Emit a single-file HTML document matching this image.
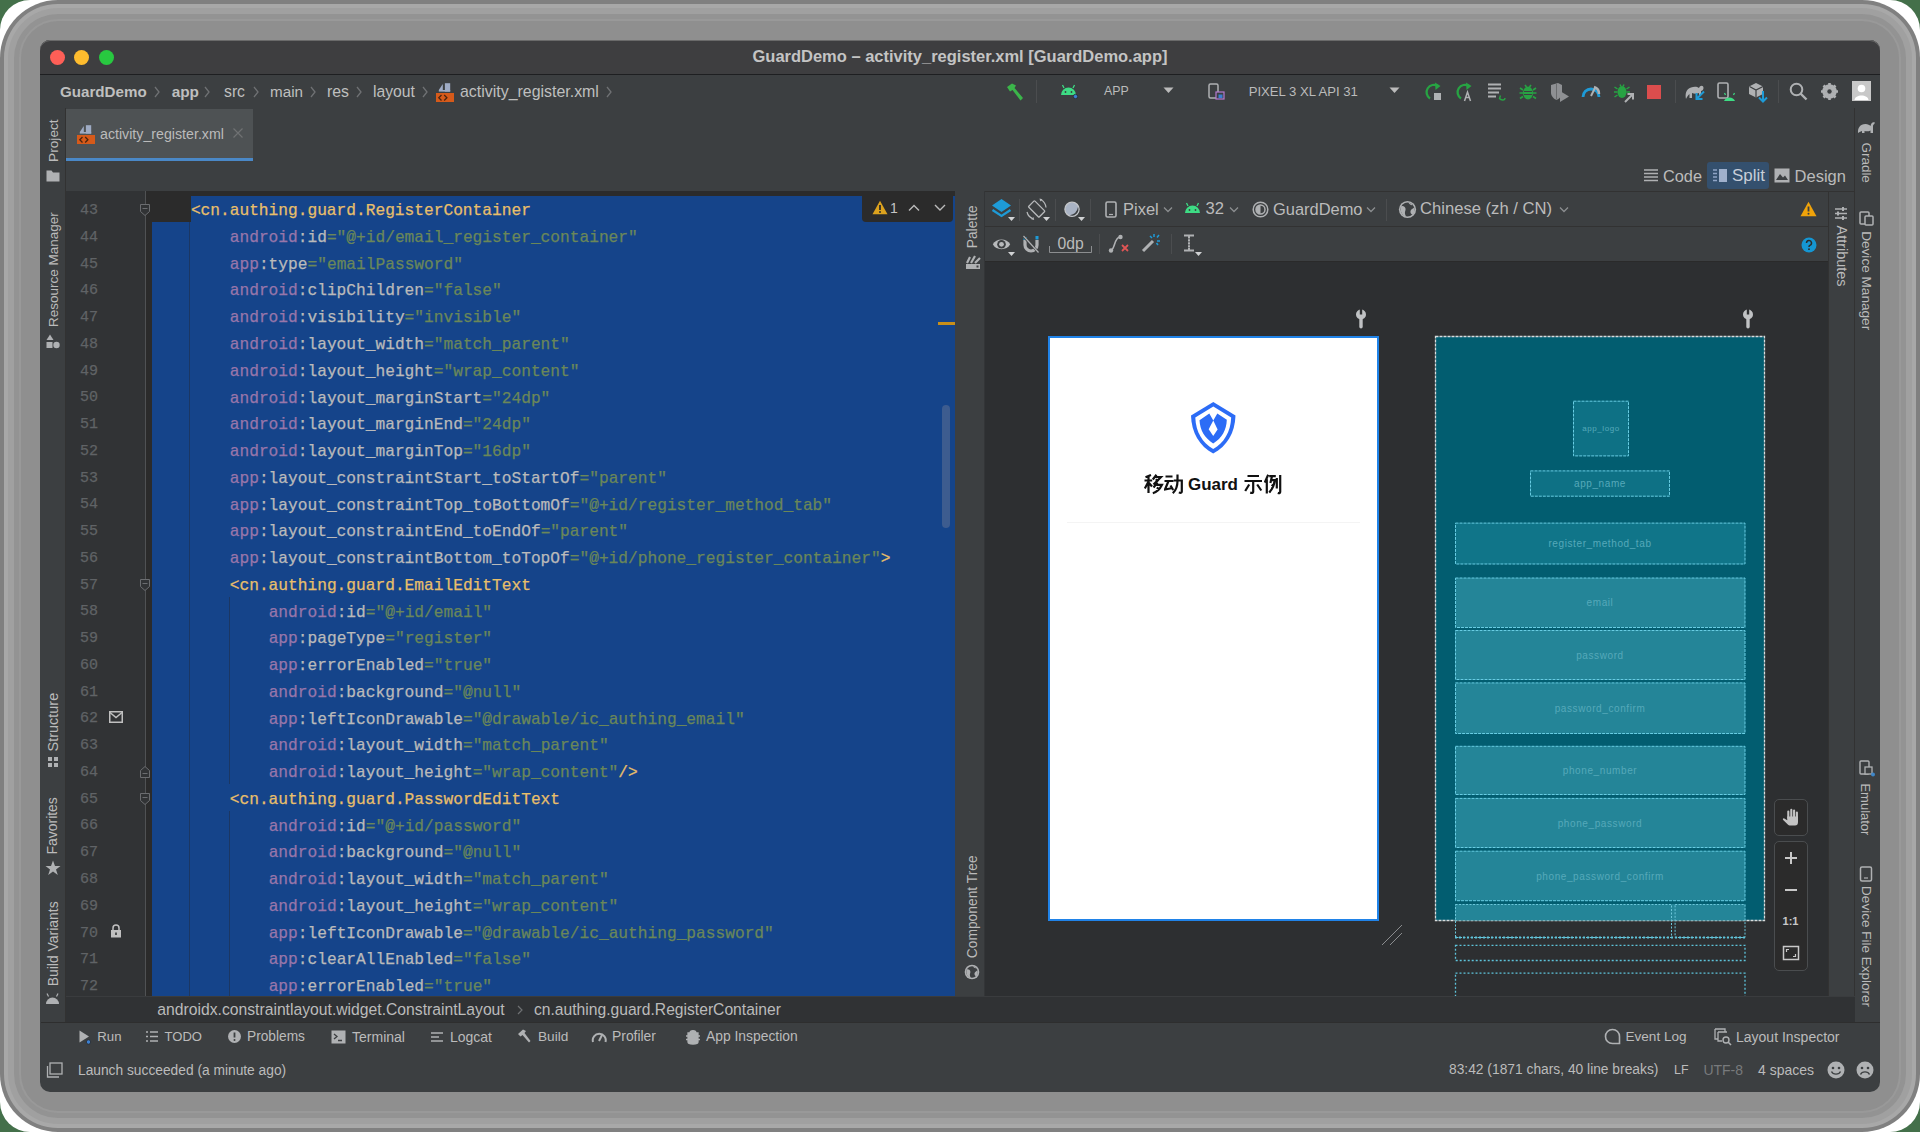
<!DOCTYPE html><html><head><meta charset="utf-8"><style>
html,body{margin:0;padding:0;width:1920px;height:1132px;overflow:hidden;background:#44704a;}
.t{position:absolute;white-space:pre;line-height:1;font-family:"Liberation Sans",sans-serif;}
.m{position:absolute;white-space:pre;font-family:"Liberation Mono",monospace;-webkit-text-stroke:0.25px currentColor;}
</style></head><body>
<div style="position:absolute;left:0px;top:0px;width:1920px;height:1132px;background:#ffffff;border-radius:30px;"></div>
<div style="position:absolute;left:0px;top:0px;width:1920px;height:1132px;background:#808080;border-radius:58px;"></div>
<div style="position:absolute;left:4px;top:4px;width:1912px;height:1124px;background:#a8a8a8;border-radius:54px;"></div>
<div style="position:absolute;left:8px;top:8px;width:1904px;height:1116px;background:#a0a0a0;border-radius:50px;"></div>
<div style="position:absolute;left:14px;top:14px;width:1892px;height:1104px;background:#939393;border-radius:44px;"></div>
<div style="position:absolute;left:19px;top:19px;width:1882px;height:1094px;background:#999999;border-radius:39px;"></div>
<div style="position:absolute;left:21px;top:21px;width:1878px;height:1090px;background:#8f8f8f;border-radius:37px;"></div>
<div style="position:absolute;left:40px;top:40px;width:1840px;height:1052px;background:#3c3f41;border-radius:10px;"></div>
<div style="position:absolute;left:40px;top:40px;width:1840px;height:34px;background:#3e3e40;border-top-left-radius:10px;border-top-right-radius:10px;box-shadow:inset 0 1px 0 #6a6a6a;"></div>
<div style="position:absolute;left:40px;top:74px;width:1840px;height:1px;background:#1e1f21;"></div>
<div style="position:absolute;left:50.0px;top:49.5px;width:15px;height:15px;border-radius:50%;background:#fe5f57;"></div>
<div style="position:absolute;left:74.2px;top:49.5px;width:15px;height:15px;border-radius:50%;background:#febc2e;"></div>
<div style="position:absolute;left:98.5px;top:49.5px;width:15px;height:15px;border-radius:50%;background:#28c840;"></div>
<div class="t" style="left:752.5px;top:47.9px;font-size:16.49px;color:#c4c4c4;font-weight:bold;">GuardDemo – activity_register.xml [GuardDemo.app]</div>
<div class="t" style="left:60.0px;top:84.1px;font-size:15.15px;color:#bfbfbf;font-weight:bold;">GuardDemo</div>
<div class="t" style="left:171.7px;top:84.0px;font-size:15.36px;color:#bfbfbf;font-weight:bold;">app</div>
<div class="t" style="left:224.0px;top:83.8px;font-size:15.75px;color:#bfbfbf;">src</div>
<div class="t" style="left:270.0px;top:84.0px;font-size:15.23px;color:#bfbfbf;">main</div>
<div class="t" style="left:327.0px;top:83.7px;font-size:15.84px;color:#bfbfbf;">res</div>
<div class="t" style="left:373.0px;top:83.8px;font-size:15.74px;color:#bfbfbf;">layout</div>
<div class="t" style="left:460.0px;top:83.7px;font-size:15.93px;color:#bfbfbf;">activity_register.xml</div>
<svg style="position:absolute;left:152.7px;top:85px;" width="8" height="14" viewBox="0 0 8 14"><path d="M2 2 L6 7 L2 12" fill="none" stroke="#6f7173" stroke-width="1.3"/></svg>
<svg style="position:absolute;left:203px;top:85px;" width="8" height="14" viewBox="0 0 8 14"><path d="M2 2 L6 7 L2 12" fill="none" stroke="#6f7173" stroke-width="1.3"/></svg>
<svg style="position:absolute;left:252px;top:85px;" width="8" height="14" viewBox="0 0 8 14"><path d="M2 2 L6 7 L2 12" fill="none" stroke="#6f7173" stroke-width="1.3"/></svg>
<svg style="position:absolute;left:309px;top:85px;" width="8" height="14" viewBox="0 0 8 14"><path d="M2 2 L6 7 L2 12" fill="none" stroke="#6f7173" stroke-width="1.3"/></svg>
<svg style="position:absolute;left:355px;top:85px;" width="8" height="14" viewBox="0 0 8 14"><path d="M2 2 L6 7 L2 12" fill="none" stroke="#6f7173" stroke-width="1.3"/></svg>
<svg style="position:absolute;left:421px;top:85px;" width="8" height="14" viewBox="0 0 8 14"><path d="M2 2 L6 7 L2 12" fill="none" stroke="#6f7173" stroke-width="1.3"/></svg>
<svg style="position:absolute;left:605px;top:85px;" width="8" height="14" viewBox="0 0 8 14"><path d="M2 2 L6 7 L2 12" fill="none" stroke="#6f7173" stroke-width="1.3"/></svg>
<div style="position:absolute;left:41px;top:108px;width:25px;height:914px;background:#3c3f41;"></div>
<div style="position:absolute;left:65px;top:108px;width:1px;height:914px;background:#323232;"></div>
<div class="t" style="left:32.0px;top:134.1px;width:42.5px;font-size:13.66px;color:#bbbbbb;transform:rotate(-90deg);transform-origin:21.2px 6.7px;">Project</div>
<div class="t" style="left:-4.2px;top:263.3px;width:114.9px;font-size:13.51px;color:#bbbbbb;transform:rotate(-90deg);transform-origin:57.4px 6.6px;">Resource Manager</div>
<div class="t" style="left:23.7px;top:714.6px;width:58.6px;font-size:14.44px;color:#bbbbbb;transform:rotate(-90deg);transform-origin:29.3px 7.1px;">Structure</div>
<div class="t" style="left:24.4px;top:819.3px;width:57.2px;font-size:13.91px;color:#bbbbbb;transform:rotate(-90deg);transform-origin:28.6px 6.8px;">Favorites</div>
<div class="t" style="left:10.5px;top:936.7px;width:85.0px;font-size:13.94px;color:#bbbbbb;transform:rotate(-90deg);transform-origin:42.5px 6.8px;">Build Variants</div>
<svg style="position:absolute;left:46px;top:169px;" width="14" height="13" viewBox="0 0 14 13"><path d="M0.5 1.5 h5 l1.5 2 h6.5 v9 h-13z" fill="#afb1b3"/></svg>
<svg style="position:absolute;left:46px;top:334px;" width="14" height="15" viewBox="0 0 14 15"><path d="M4 0.5 L7.5 6 H0.5z" fill="#afb1b3"/><rect x="0.5" y="8" width="6" height="6" fill="#afb1b3"/><circle cx="10.5" cy="11" r="3.2" fill="#afb1b3"/></svg>
<svg style="position:absolute;left:47px;top:756px;" width="12" height="14" viewBox="0 0 12 14"><rect x="1" y="1" width="4" height="4" fill="#afb1b3"/><rect x="7" y="1" width="4" height="4" fill="#afb1b3"/><rect x="1" y="7" width="4" height="4" fill="#afb1b3"/><rect x="7" y="7" width="4" height="4" fill="#afb1b3"/></svg>
<svg style="position:absolute;left:45px;top:860px;" width="16" height="16" viewBox="0 0 16 16"><path d="M8 0.5 L10 6 L15.5 6 L11 9.5 L12.8 15 L8 11.6 L3.2 15 L5 9.5 L0.5 6 L6 6z" fill="#afb1b3"/></svg>
<svg style="position:absolute;left:45px;top:992px;" width="15" height="13" viewBox="0 0 15 13"><path d="M1 12 A6.5 6.5 0 0 1 14 12z" fill="#afb1b3"/><path d="M3.5 4.5 L2 1.5 M11.5 4.5 L13 1.5" stroke="#afb1b3" stroke-width="1.2"/></svg>
<div style="position:absolute;left:66px;top:108px;width:1814px;height:53px;background:#3c3f41;"></div>
<div style="position:absolute;left:66px;top:109px;width:187px;height:49px;background:#4e5254;"></div>
<div style="position:absolute;left:66px;top:158px;width:187px;height:3px;background:#4a88c7;"></div>
<div class="t" style="left:100.0px;top:126.5px;font-size:14.21px;color:#bbbbbb;">activity_register.xml</div>
<svg style="position:absolute;left:77px;top:125px;" width="18" height="19" viewBox="0 0 18 19"><path d="M2.8 7 L6.8 1 V7Z" fill="#9eabc4"/><rect x="8.9" y="0.2" width="5.3" height="8.4" fill="#9eabc4"/><rect x="2.8" y="7" width="11.4" height="1.6" fill="#9eabc4"/><rect x="0" y="10" width="18" height="9" fill="#d65a1a"/><path d="M5.5 12 L2.8 14.8 L5.5 17.5 M8.2 12 L10.9 14.8 L8.2 17.5" stroke="#4a2510" stroke-width="1.3" fill="none"/></svg>
<svg style="position:absolute;left:232px;top:127px;" width="12" height="12" viewBox="0 0 12 12"><path d="M1.5 1.5 L10.5 10.5 M10.5 1.5 L1.5 10.5" stroke="#6f7173" stroke-width="1.2"/></svg>
<div style="position:absolute;left:1707px;top:162px;width:62px;height:27px;background:#34506e;border-radius:3px;"></div>
<div class="t" style="left:1663.0px;top:167.6px;font-size:16.31px;color:#bbbbbb;">Code</div>
<div class="t" style="left:1732.0px;top:167.9px;font-size:16.96px;color:#c8ced8;">Split</div>
<div class="t" style="left:1794.6px;top:167.5px;font-size:16.51px;color:#bbbbbb;">Design</div>
<svg style="position:absolute;left:1643px;top:168px;" width="16" height="15" viewBox="0 0 16 15"><path d="M1 2h14M1 5.5h14M1 9h14M1 12.5h14" stroke="#afb1b3" stroke-width="1.6"/></svg>
<svg style="position:absolute;left:1712px;top:168px;" width="16" height="15" viewBox="0 0 16 15"><path d="M1 2h4M1 5.5h4M1 9h4M1 12.5h4" stroke="#8fa4c6" stroke-width="1.6"/><rect x="7" y="1" width="8" height="13" fill="#9fb0cc"/></svg>
<svg style="position:absolute;left:1774px;top:168px;" width="16" height="15" viewBox="0 0 16 15"><rect x="0.5" y="0.5" width="15" height="14" fill="#afb1b3"/><path d="M2 12 L6 6 L9 9.5 L11 7.5 L14 12z" fill="#3c3f41"/></svg>
<div style="position:absolute;left:66px;top:161px;width:889px;height:30px;background:#3c3f41;"></div>
<div style="position:absolute;left:66px;top:191px;width:889px;height:805px;background:#2b2b2b;"></div>
<div style="position:absolute;left:66px;top:191px;width:79px;height:805px;background:#313335;"></div>
<div style="position:absolute;left:144.5px;top:191px;width:1.3px;height:805px;background:#505254;"></div>
<div style="position:absolute;left:191px;top:195.5px;width:764px;height:27.26px;background:#15448a;"></div>
<div style="position:absolute;left:152px;top:222.26px;width:803px;height:773.74px;background:#15448a;"></div>
<div style="position:absolute;left:189px;top:222.26px;width:1px;height:773.74px;background:#1b3763;"></div>
<div style="position:absolute;left:228.5px;top:596.9000000000001px;width:1px;height:187.32000000000002px;background:#1b3763;"></div>
<div style="position:absolute;left:228.5px;top:810.98px;width:1px;height:185.01999999999998px;background:#1b3763;"></div>
<div class="m" style="left:190.88px;top:198.20px;height:26.76px;line-height:26.76px;font-size:16.2px;"><span style="color:#e8bf6a">&lt;cn.authing.guard.RegisterContainer</span></div>
<div class="m" style="left:60px;width:38px;text-align:right;top:198.00px;line-height:26.76px;font-size:15px;color:#606366;">43</div>
<div class="m" style="left:229.76px;top:224.96px;height:26.76px;line-height:26.76px;font-size:16.2px;"><span style="color:#9876aa">android</span><span style="color:#bababa">:id</span><span style="color:#6a8759">="@+id/email_register_container"</span></div>
<div class="m" style="left:60px;width:38px;text-align:right;top:224.76px;line-height:26.76px;font-size:15px;color:#606366;">44</div>
<div class="m" style="left:229.76px;top:251.72px;height:26.76px;line-height:26.76px;font-size:16.2px;"><span style="color:#9876aa">app</span><span style="color:#bababa">:type</span><span style="color:#6a8759">="emailPassword"</span></div>
<div class="m" style="left:60px;width:38px;text-align:right;top:251.52px;line-height:26.76px;font-size:15px;color:#606366;">45</div>
<div class="m" style="left:229.76px;top:278.48px;height:26.76px;line-height:26.76px;font-size:16.2px;"><span style="color:#9876aa">android</span><span style="color:#bababa">:clipChildren</span><span style="color:#6a8759">="false"</span></div>
<div class="m" style="left:60px;width:38px;text-align:right;top:278.28px;line-height:26.76px;font-size:15px;color:#606366;">46</div>
<div class="m" style="left:229.76px;top:305.24px;height:26.76px;line-height:26.76px;font-size:16.2px;"><span style="color:#9876aa">android</span><span style="color:#bababa">:visibility</span><span style="color:#6a8759">="invisible"</span></div>
<div class="m" style="left:60px;width:38px;text-align:right;top:305.04px;line-height:26.76px;font-size:15px;color:#606366;">47</div>
<div class="m" style="left:229.76px;top:332.00px;height:26.76px;line-height:26.76px;font-size:16.2px;"><span style="color:#9876aa">android</span><span style="color:#bababa">:layout_width</span><span style="color:#6a8759">="match_parent"</span></div>
<div class="m" style="left:60px;width:38px;text-align:right;top:331.80px;line-height:26.76px;font-size:15px;color:#606366;">48</div>
<div class="m" style="left:229.76px;top:358.76px;height:26.76px;line-height:26.76px;font-size:16.2px;"><span style="color:#9876aa">android</span><span style="color:#bababa">:layout_height</span><span style="color:#6a8759">="wrap_content"</span></div>
<div class="m" style="left:60px;width:38px;text-align:right;top:358.56px;line-height:26.76px;font-size:15px;color:#606366;">49</div>
<div class="m" style="left:229.76px;top:385.52px;height:26.76px;line-height:26.76px;font-size:16.2px;"><span style="color:#9876aa">android</span><span style="color:#bababa">:layout_marginStart</span><span style="color:#6a8759">="24dp"</span></div>
<div class="m" style="left:60px;width:38px;text-align:right;top:385.32px;line-height:26.76px;font-size:15px;color:#606366;">50</div>
<div class="m" style="left:229.76px;top:412.28px;height:26.76px;line-height:26.76px;font-size:16.2px;"><span style="color:#9876aa">android</span><span style="color:#bababa">:layout_marginEnd</span><span style="color:#6a8759">="24dp"</span></div>
<div class="m" style="left:60px;width:38px;text-align:right;top:412.08px;line-height:26.76px;font-size:15px;color:#606366;">51</div>
<div class="m" style="left:229.76px;top:439.04px;height:26.76px;line-height:26.76px;font-size:16.2px;"><span style="color:#9876aa">android</span><span style="color:#bababa">:layout_marginTop</span><span style="color:#6a8759">="16dp"</span></div>
<div class="m" style="left:60px;width:38px;text-align:right;top:438.84px;line-height:26.76px;font-size:15px;color:#606366;">52</div>
<div class="m" style="left:229.76px;top:465.80px;height:26.76px;line-height:26.76px;font-size:16.2px;"><span style="color:#9876aa">app</span><span style="color:#bababa">:layout_constraintStart_toStartOf</span><span style="color:#6a8759">="parent"</span></div>
<div class="m" style="left:60px;width:38px;text-align:right;top:465.60px;line-height:26.76px;font-size:15px;color:#606366;">53</div>
<div class="m" style="left:229.76px;top:492.56px;height:26.76px;line-height:26.76px;font-size:16.2px;"><span style="color:#9876aa">app</span><span style="color:#bababa">:layout_constraintTop_toBottomOf</span><span style="color:#6a8759">="@+id/register_method_tab"</span></div>
<div class="m" style="left:60px;width:38px;text-align:right;top:492.36px;line-height:26.76px;font-size:15px;color:#606366;">54</div>
<div class="m" style="left:229.76px;top:519.32px;height:26.76px;line-height:26.76px;font-size:16.2px;"><span style="color:#9876aa">app</span><span style="color:#bababa">:layout_constraintEnd_toEndOf</span><span style="color:#6a8759">="parent"</span></div>
<div class="m" style="left:60px;width:38px;text-align:right;top:519.12px;line-height:26.76px;font-size:15px;color:#606366;">55</div>
<div class="m" style="left:229.76px;top:546.08px;height:26.76px;line-height:26.76px;font-size:16.2px;"><span style="color:#9876aa">app</span><span style="color:#bababa">:layout_constraintBottom_toTopOf</span><span style="color:#6a8759">="@+id/phone_register_container"</span><span style="color:#e8bf6a">&gt;</span></div>
<div class="m" style="left:60px;width:38px;text-align:right;top:545.88px;line-height:26.76px;font-size:15px;color:#606366;">56</div>
<div class="m" style="left:229.76px;top:572.84px;height:26.76px;line-height:26.76px;font-size:16.2px;"><span style="color:#e8bf6a">&lt;cn.authing.guard.EmailEditText</span></div>
<div class="m" style="left:60px;width:38px;text-align:right;top:572.64px;line-height:26.76px;font-size:15px;color:#606366;">57</div>
<div class="m" style="left:268.64px;top:599.60px;height:26.76px;line-height:26.76px;font-size:16.2px;"><span style="color:#9876aa">android</span><span style="color:#bababa">:id</span><span style="color:#6a8759">="@+id/email"</span></div>
<div class="m" style="left:60px;width:38px;text-align:right;top:599.40px;line-height:26.76px;font-size:15px;color:#606366;">58</div>
<div class="m" style="left:268.64px;top:626.36px;height:26.76px;line-height:26.76px;font-size:16.2px;"><span style="color:#9876aa">app</span><span style="color:#bababa">:pageType</span><span style="color:#6a8759">="register"</span></div>
<div class="m" style="left:60px;width:38px;text-align:right;top:626.16px;line-height:26.76px;font-size:15px;color:#606366;">59</div>
<div class="m" style="left:268.64px;top:653.12px;height:26.76px;line-height:26.76px;font-size:16.2px;"><span style="color:#9876aa">app</span><span style="color:#bababa">:errorEnabled</span><span style="color:#6a8759">="true"</span></div>
<div class="m" style="left:60px;width:38px;text-align:right;top:652.92px;line-height:26.76px;font-size:15px;color:#606366;">60</div>
<div class="m" style="left:268.64px;top:679.88px;height:26.76px;line-height:26.76px;font-size:16.2px;"><span style="color:#9876aa">android</span><span style="color:#bababa">:background</span><span style="color:#6a8759">="@null"</span></div>
<div class="m" style="left:60px;width:38px;text-align:right;top:679.68px;line-height:26.76px;font-size:15px;color:#606366;">61</div>
<div class="m" style="left:268.64px;top:706.64px;height:26.76px;line-height:26.76px;font-size:16.2px;"><span style="color:#9876aa">app</span><span style="color:#bababa">:leftIconDrawable</span><span style="color:#6a8759">="@drawable/ic_authing_email"</span></div>
<div class="m" style="left:60px;width:38px;text-align:right;top:706.44px;line-height:26.76px;font-size:15px;color:#606366;">62</div>
<div class="m" style="left:268.64px;top:733.40px;height:26.76px;line-height:26.76px;font-size:16.2px;"><span style="color:#9876aa">android</span><span style="color:#bababa">:layout_width</span><span style="color:#6a8759">="match_parent"</span></div>
<div class="m" style="left:60px;width:38px;text-align:right;top:733.20px;line-height:26.76px;font-size:15px;color:#606366;">63</div>
<div class="m" style="left:268.64px;top:760.16px;height:26.76px;line-height:26.76px;font-size:16.2px;"><span style="color:#9876aa">android</span><span style="color:#bababa">:layout_height</span><span style="color:#6a8759">="wrap_content"</span><span style="color:#e8bf6a">/&gt;</span></div>
<div class="m" style="left:60px;width:38px;text-align:right;top:759.96px;line-height:26.76px;font-size:15px;color:#606366;">64</div>
<div class="m" style="left:229.76px;top:786.92px;height:26.76px;line-height:26.76px;font-size:16.2px;"><span style="color:#e8bf6a">&lt;cn.authing.guard.PasswordEditText</span></div>
<div class="m" style="left:60px;width:38px;text-align:right;top:786.72px;line-height:26.76px;font-size:15px;color:#606366;">65</div>
<div class="m" style="left:268.64px;top:813.68px;height:26.76px;line-height:26.76px;font-size:16.2px;"><span style="color:#9876aa">android</span><span style="color:#bababa">:id</span><span style="color:#6a8759">="@+id/password"</span></div>
<div class="m" style="left:60px;width:38px;text-align:right;top:813.48px;line-height:26.76px;font-size:15px;color:#606366;">66</div>
<div class="m" style="left:268.64px;top:840.44px;height:26.76px;line-height:26.76px;font-size:16.2px;"><span style="color:#9876aa">android</span><span style="color:#bababa">:background</span><span style="color:#6a8759">="@null"</span></div>
<div class="m" style="left:60px;width:38px;text-align:right;top:840.24px;line-height:26.76px;font-size:15px;color:#606366;">67</div>
<div class="m" style="left:268.64px;top:867.20px;height:26.76px;line-height:26.76px;font-size:16.2px;"><span style="color:#9876aa">android</span><span style="color:#bababa">:layout_width</span><span style="color:#6a8759">="match_parent"</span></div>
<div class="m" style="left:60px;width:38px;text-align:right;top:867.00px;line-height:26.76px;font-size:15px;color:#606366;">68</div>
<div class="m" style="left:268.64px;top:893.96px;height:26.76px;line-height:26.76px;font-size:16.2px;"><span style="color:#9876aa">android</span><span style="color:#bababa">:layout_height</span><span style="color:#6a8759">="wrap_content"</span></div>
<div class="m" style="left:60px;width:38px;text-align:right;top:893.76px;line-height:26.76px;font-size:15px;color:#606366;">69</div>
<div class="m" style="left:268.64px;top:920.72px;height:26.76px;line-height:26.76px;font-size:16.2px;"><span style="color:#9876aa">app</span><span style="color:#bababa">:leftIconDrawable</span><span style="color:#6a8759">="@drawable/ic_authing_password"</span></div>
<div class="m" style="left:60px;width:38px;text-align:right;top:920.52px;line-height:26.76px;font-size:15px;color:#606366;">70</div>
<div class="m" style="left:268.64px;top:947.48px;height:26.76px;line-height:26.76px;font-size:16.2px;"><span style="color:#9876aa">app</span><span style="color:#bababa">:clearAllEnabled</span><span style="color:#6a8759">="false"</span></div>
<div class="m" style="left:60px;width:38px;text-align:right;top:947.28px;line-height:26.76px;font-size:15px;color:#606366;">71</div>
<div class="m" style="left:268.64px;top:974.24px;height:26.76px;line-height:26.76px;font-size:16.2px;"><span style="color:#9876aa">app</span><span style="color:#bababa">:errorEnabled</span><span style="color:#6a8759">="true"</span></div>
<div class="m" style="left:60px;width:38px;text-align:right;top:974.04px;line-height:26.76px;font-size:15px;color:#606366;">72</div>
<svg style="position:absolute;left:139px;top:203.38px;" width="12" height="14" viewBox="0 0 12 14"><path d="M1.5 1.5 H10.5 V8.5 L6 12.5 L1.5 8.5Z" fill="#313335" stroke="#6b6d70" stroke-width="1"/><path d="M3.5 5.5 H8.5" stroke="#6b6d70" stroke-width="1"/></svg>
<svg style="position:absolute;left:139px;top:578.0200000000001px;" width="12" height="14" viewBox="0 0 12 14"><path d="M1.5 1.5 H10.5 V8.5 L6 12.5 L1.5 8.5Z" fill="#313335" stroke="#6b6d70" stroke-width="1"/><path d="M3.5 5.5 H8.5" stroke="#6b6d70" stroke-width="1"/></svg>
<svg style="position:absolute;left:139px;top:765.34px;" width="12" height="14" viewBox="0 0 12 14"><path d="M1.5 12.5 H10.5 V5.5 L6 1.5 L1.5 5.5Z" fill="#313335" stroke="#6b6d70" stroke-width="1"/><path d="M3.5 8.5 H8.5" stroke="#6b6d70" stroke-width="1"/></svg>
<svg style="position:absolute;left:139px;top:792.1px;" width="12" height="14" viewBox="0 0 12 14"><path d="M1.5 1.5 H10.5 V8.5 L6 12.5 L1.5 8.5Z" fill="#313335" stroke="#6b6d70" stroke-width="1"/><path d="M3.5 5.5 H8.5" stroke="#6b6d70" stroke-width="1"/></svg>
<svg style="position:absolute;left:109px;top:711.32px;" width="14" height="12" viewBox="0 0 14 12"><rect x="0.75" y="0.75" width="12.5" height="10.5" fill="none" stroke="#c0c0c0" stroke-width="1.5"/><path d="M1 1.5 L7 6.5 L13 1.5" fill="none" stroke="#c0c0c0" stroke-width="1.5"/></svg>
<svg style="position:absolute;left:110px;top:924.4000000000001px;" width="12" height="14" viewBox="0 0 12 14"><path d="M3 6 V4 A3 3 0 0 1 9 4 V6" fill="none" stroke="#c0c0c0" stroke-width="1.5"/><rect x="1" y="6" width="10" height="7.5" fill="#c0c0c0"/><rect x="5.2" y="8.5" width="1.6" height="2.5" fill="#313335"/></svg>
<div style="position:absolute;left:862px;top:192px;width:91px;height:29.5px;background:#2b2b2b;border-bottom-left-radius:4px;border-bottom-right-radius:4px;"></div>
<svg style="position:absolute;left:872px;top:200px;" width="16" height="15" viewBox="0 0 16 15"><path d="M8 0.8 L15.5 14.2 H0.5Z" fill="#dca21e"/><path d="M8 5 V10" stroke="#2b2b2b" stroke-width="1.8"/><circle cx="8" cy="12" r="1" fill="#2b2b2b"/></svg>
<div class="t" style="left:890.0px;top:201.1px;font-size:14.00px;color:#c4c4c4;">1</div>
<svg style="position:absolute;left:908px;top:203px;" width="12" height="9" viewBox="0 0 12 9"><path d="M1 7.5 L6 2.5 L11 7.5" fill="none" stroke="#bbbbbb" stroke-width="1.4"/></svg>
<svg style="position:absolute;left:934px;top:203px;" width="12" height="9" viewBox="0 0 12 9"><path d="M1 2 L6 7 L11 2" fill="none" stroke="#bbbbbb" stroke-width="1.4"/></svg>
<div style="position:absolute;left:938px;top:322px;width:17px;height:3px;background:#c88f1a;"></div>
<div style="position:absolute;left:942px;top:405px;width:8px;height:123px;background:#3d5c8f;border-radius:4px;"></div>
<div style="position:absolute;left:955px;top:191px;width:30px;height:805px;background:#3c3f41;"></div>
<div style="position:absolute;left:984px;top:191px;width:1px;height:805px;background:#333537;"></div>
<div class="t" style="left:950.8px;top:220.4px;width:43.0px;font-size:13.81px;color:#bbbbbb;transform:rotate(-90deg);transform-origin:21.5px 6.8px;">Palette</div>
<svg style="position:absolute;left:965px;top:254px;" width="16" height="16" viewBox="0 0 16 16"><rect x="1" y="10" width="14" height="5" fill="#afb1b3"/><rect x="11.5" y="11.5" width="2" height="2" fill="#3c3f41"/><path d="M2 9 L5 3 M6 9 L10 2 M10 9 L15 4" stroke="#afb1b3" stroke-width="2.2"/></svg>
<div class="t" style="left:921.0px;top:899.7px;width:103.0px;font-size:13.83px;color:#bbbbbb;transform:rotate(-90deg);transform-origin:51.5px 6.8px;">Component Tree</div>
<svg style="position:absolute;left:964px;top:964px;" width="16" height="16" viewBox="0 0 16 16"><circle cx="8" cy="8" r="7.3" fill="#afb1b3"/><circle cx="8" cy="8" r="5.8" fill="#3c3f41"/><path d="M2.5 5.5 C4 4.7 6 5.5 6.3 7.2 C6.7 9 5.5 9.8 6 12 L6.8 14 C4.3 13.6 2.5 11 2.3 8.5Z M8.8 2.3 C9.7 3.8 11.4 4.6 12.2 4.2 L13.7 6.3 C12.6 7.1 11 7.6 10.5 9.3 C10.1 11 11.3 11.8 12.2 12.6 C13.4 11.4 13.8 9.7 13.8 8 C13.7 5 11.6 2.7 8.8 2.3Z" fill="#afb1b3"/></svg>
<div style="position:absolute;left:985px;top:191px;width:843px;height:70px;background:#3c3f41;"></div>
<div style="position:absolute;left:985px;top:226px;width:843px;height:1px;background:#323232;"></div>
<div style="position:absolute;left:985px;top:261px;width:843px;height:1px;background:#2a2a2a;"></div>
<div style="position:absolute;left:1018.75px;top:199px;width:1px;height:22px;background:#4b4d4f;"></div>
<div style="position:absolute;left:1054.5px;top:199px;width:1px;height:22px;background:#4b4d4f;"></div>
<div style="position:absolute;left:1089.5px;top:199px;width:1px;height:22px;background:#4b4d4f;"></div>
<div style="position:absolute;left:1386px;top:199px;width:1px;height:22px;background:#4b4d4f;"></div>
<div style="position:absolute;left:1098.75px;top:234px;width:1px;height:20px;background:#4b4d4f;"></div>
<div style="position:absolute;left:1171px;top:234px;width:1px;height:20px;background:#4b4d4f;"></div>
<svg style="position:absolute;left:991px;top:198px;" width="21" height="22" viewBox="0 0 21 22"><path d="M10.5 1 L20 7.5 L10.5 14 L1 7.5Z" fill="#1e9bd7"/><path d="M1.5 12 L10.5 18 L19.5 12" fill="none" stroke="#1e9bd7" stroke-width="2.2"/></svg>
<svg style="position:absolute;left:1008px;top:217px;" width="8" height="5" viewBox="0 0 8 5"><path d="M0 0 H7 L3.5 4Z" fill="#d0d2d4"/></svg>
<svg style="position:absolute;left:1024px;top:196px;" width="26" height="26" viewBox="0 0 26 26"><rect x="8.3" y="5.5" width="8.7" height="15" rx="0.8" transform="rotate(-45 12.6 13)" fill="none" stroke="#b8babc" stroke-width="1.3"/><path d="M17 3.8 A10 10 0 0 1 22 11.5" fill="none" stroke="#b8babc" stroke-width="1.2"/><path d="M15.5 2.5 L18.5 3.2 L16.3 5.5Z" fill="#b8babc"/><path d="M3 16 A10 10 0 0 0 8.5 22.6" fill="none" stroke="#b8babc" stroke-width="1.2"/><path d="M10.2 24 L7.2 23.2 L9.4 21Z" fill="#b8babc"/></svg>
<svg style="position:absolute;left:1043px;top:217px;" width="8" height="5" viewBox="0 0 8 5"><path d="M0 0 H7 L3.5 4Z" fill="#d0d2d4"/></svg>
<svg style="position:absolute;left:1063px;top:200px;" width="18" height="19" viewBox="0 0 18 19"><circle cx="9" cy="9.3" r="7.1" fill="#a9b3c4" stroke="#c4c6c8" stroke-width="1.3"/><path d="M15 7.1 A6.4 6.4 0 0 1 6.8 15.3 A10 10 0 0 0 15 7.1Z" fill="#3c3f41"/></svg>
<svg style="position:absolute;left:1078px;top:217px;" width="8" height="5" viewBox="0 0 8 5"><path d="M0 0 H7 L3.5 4Z" fill="#d0d2d4"/></svg>
<svg style="position:absolute;left:1105px;top:201px;" width="12" height="17" viewBox="0 0 12 17"><rect x="1" y="1" width="10" height="15" rx="1.5" fill="none" stroke="#afb1b3" stroke-width="1.6"/><path d="M4 13.5 H8" stroke="#afb1b3" stroke-width="1.2"/></svg>
<div class="t" style="left:1123.0px;top:201.4px;font-size:16.49px;color:#bbbbbb;">Pixel</div>
<svg style="position:absolute;left:1163px;top:206px;" width="10" height="7" viewBox="0 0 10 7"><path d="M1 1.5 L5 5.5 L9 1.5" fill="none" stroke="#8c8e90" stroke-width="1.3"/></svg>
<svg style="position:absolute;left:1184px;top:202px;" width="17" height="12" viewBox="0 0 17 12"><path d="M1 11 A7.5 7.5 0 0 1 16 11z" fill="#3ddc84"/><path d="M4 4 L2.5 1 M13 4 L14.5 1" stroke="#3ddc84" stroke-width="1.3"/><circle cx="5.5" cy="8" r="0.9" fill="#3c3f41"/><circle cx="11.5" cy="8" r="0.9" fill="#3c3f41"/></svg>
<div class="t" style="left:1205.5px;top:201.3px;font-size:16.63px;color:#bbbbbb;">32</div>
<svg style="position:absolute;left:1229px;top:206px;" width="10" height="7" viewBox="0 0 10 7"><path d="M1 1.5 L5 5.5 L9 1.5" fill="none" stroke="#8c8e90" stroke-width="1.3"/></svg>
<svg style="position:absolute;left:1252px;top:201px;" width="17" height="17" viewBox="0 0 17 17"><circle cx="8.5" cy="8.5" r="7.3" fill="none" stroke="#afb1b3" stroke-width="1.5"/><circle cx="8.5" cy="8.5" r="4.5" fill="none" stroke="#afb1b3" stroke-width="1.5"/><path d="M8.5 4 A4.5 4.5 0 0 0 8.5 13Z" fill="#afb1b3"/></svg>
<div class="t" style="left:1273.0px;top:201.4px;font-size:16.43px;color:#bbbbbb;">GuardDemo</div>
<svg style="position:absolute;left:1366px;top:206px;" width="10" height="7" viewBox="0 0 10 7"><path d="M1 1.5 L5 5.5 L9 1.5" fill="none" stroke="#8c8e90" stroke-width="1.3"/></svg>
<svg style="position:absolute;left:1398px;top:200px;" width="19" height="19" viewBox="0 0 19 19"><circle cx="9.5" cy="9.5" r="8.6" fill="#afb1b3"/><circle cx="9.5" cy="9.5" r="6.9" fill="#3c3f41"/><path d="M3 6.5 C5 5.5 7 6.5 7.5 8.5 C8 10.5 6.5 11.5 7 14 L8 16.5 C5 16 3 13 2.7 10Z M10.5 2.7 C11.5 4.5 13.5 5.5 14.5 5 L16.3 7.5 C15 8.5 13 9 12.5 11 C12 13 13.5 14 14.5 15 C16 13.5 16.5 11.5 16.4 9.5 C16.3 6 13.8 3.2 10.5 2.7Z" fill="#afb1b3"/></svg>
<div class="t" style="left:1420.0px;top:201.4px;font-size:16.61px;color:#bbbbbb;">Chinese (zh / CN)</div>
<svg style="position:absolute;left:1559px;top:206px;" width="10" height="7" viewBox="0 0 10 7"><path d="M1 1.5 L5 5.5 L9 1.5" fill="none" stroke="#8c8e90" stroke-width="1.3"/></svg>
<svg style="position:absolute;left:1800px;top:201px;" width="17" height="16" viewBox="0 0 17 16"><path d="M8.5 0.8 L16.5 15.2 H0.5Z" fill="#f0a30a"/><path d="M8.5 5.5 V10.5" stroke="#3c3f41" stroke-width="1.8"/><circle cx="8.5" cy="12.8" r="1" fill="#3c3f41"/></svg>
<svg style="position:absolute;left:992px;top:237px;" width="19" height="15" viewBox="0 0 19 15"><path d="M0.8 7.3 C4 0.8 15 0.8 18.2 7.3 C15 13.8 4 13.8 0.8 7.3Z" fill="#b8babc"/><circle cx="9.5" cy="7.3" r="4.3" fill="#3c3f41"/><circle cx="9.5" cy="7.3" r="2.4" fill="#b8babc"/></svg>
<svg style="position:absolute;left:1008px;top:252px;" width="8" height="5" viewBox="0 0 8 5"><path d="M0 0 H7 L3.5 4Z" fill="#d0d2d4"/></svg>
<svg style="position:absolute;left:1022px;top:235px;" width="18" height="19" viewBox="0 0 18 19"><path d="M3 5 V10 A6 6 0 0 0 15 10 V5" fill="none" stroke="#afb1b3" stroke-width="3.2"/><rect x="1.5" y="2" width="3" height="3" fill="#1e9bd7"/><rect x="13.5" y="1" width="3" height="3.5" fill="#1e9bd7"/><path d="M1 1 L17 18" stroke="#3c3f41" stroke-width="2.5"/><path d="M1.5 1 L16.5 17.5" stroke="#afb1b3" stroke-width="1.2"/></svg>
<div class="t" style="left:1057.5px;top:235.8px;font-size:15.73px;color:#bbbbbb;">0dp</div>
<svg style="position:absolute;left:1048px;top:246px;" width="45" height="8" viewBox="0 0 45 8"><path d="M1.5 0 V6.5 H43.5 V0" fill="none" stroke="#8c8e90" stroke-width="1"/></svg>
<svg style="position:absolute;left:1108px;top:233px;" width="22" height="21" viewBox="0 0 22 21"><path d="M2 18 C7 18 6 4 12 4" fill="none" stroke="#afb1b3" stroke-width="1.6"/><circle cx="3" cy="17.5" r="2.2" fill="#afb1b3"/><circle cx="12.5" cy="4" r="2.2" fill="#afb1b3"/><path d="M14 12 L20 18 M20 12 L14 18" stroke="#e05555" stroke-width="1.8"/></svg>
<svg style="position:absolute;left:1141px;top:232px;" width="21" height="21" viewBox="0 0 21 21"><path d="M2 19 L12 9" stroke="#afb1b3" stroke-width="3"/><path d="M13 2 V5 M18 3 L16 5.5 M19 9 H16 M9 4 L11 6 M17 13 L15.5 11" stroke="#1e9bd7" stroke-width="1.5"/></svg>
<svg style="position:absolute;left:1182px;top:234px;" width="20" height="22" viewBox="0 0 20 22"><path d="M2 1.5 H12 M2 16.5 H12 M7 1.5 V16.5" stroke="#afb1b3" stroke-width="2"/><path d="M7 4 V14" stroke="#3c3f41" stroke-width="1" stroke-dasharray="1.5 1.5"/></svg>
<svg style="position:absolute;left:1195px;top:252px;" width="8" height="5" viewBox="0 0 8 5"><path d="M0 0 H7 L3.5 4Z" fill="#d0d2d4"/></svg>
<svg style="position:absolute;left:1801px;top:237px;" width="16" height="16" viewBox="0 0 16 16"><circle cx="8" cy="8" r="7.5" fill="#1596d2"/><path d="M5.5 6 A2.5 2.5 0 1 1 8.8 8.4 C8 8.8 8 9.3 8 10" fill="none" stroke="#2b2b2b" stroke-width="1.5"/><circle cx="8" cy="12.2" r="0.9" fill="#2b2b2b"/></svg>
<div style="position:absolute;left:985px;top:262px;width:843px;height:734px;background:#2d2f31;"></div>
<svg style="position:absolute;left:1355.3px;top:309px;" width="12" height="20" viewBox="0 0 12 20"><circle cx="6" cy="5.5" r="5" fill="#c0c2c4"/><rect x="4.8" y="0" width="2.4" height="5.5" fill="#2d2f31"/><path d="M4.3 8 H7.7 V17.8 A1.7 1.7 0 0 1 4.3 17.8Z" fill="#c0c2c4"/></svg>
<svg style="position:absolute;left:1742px;top:309px;" width="12" height="20" viewBox="0 0 12 20"><circle cx="6" cy="5.5" r="5" fill="#c0c2c4"/><rect x="4.8" y="0" width="2.4" height="5.5" fill="#2d2f31"/><path d="M4.3 8 H7.7 V17.8 A1.7 1.7 0 0 1 4.3 17.8Z" fill="#c0c2c4"/></svg>
<div style="position:absolute;left:1048px;top:336px;width:331px;height:585px;background:#ffffff;box-sizing:border-box;border:2px solid #2083e8;"></div>
<div style="position:absolute;left:1067px;top:522px;width:293px;height:1px;background:#f4f4f4;"></div>
<svg style="position:absolute;left:1180px;top:395px;" width="65" height="65" viewBox="0 0 65 65"><path d="M33.3 6.9 L55.5 20.5 C55 38 47 51 33.2 58.6 C19.5 51 11.5 38 11 20.5 Z" fill="#2c6cf6"/><path d="M33.3 11.5 L51.2 22.6 C50.6 37 44 48 33.2 54 C22.4 48 15.8 37 15.3 22.6Z" fill="#ffffff"/><path d="M19.5 25.3 L29.3 18.4 L33.3 25.5 L37.3 18.4 L46.8 24.7 C46.5 35 42 43 33.2 48.5 C24.5 43 20 35 19.5 25.3Z" fill="#2c6cf6"/><path d="M33.3 25.5 L37.6 34.4 L33.2 41 L28.7 34.2Z" fill="#ffffff"/></svg>
<svg style="position:absolute;left:1144px;top:474px;" width="20" height="21" viewBox="0 0 20 21"><path d="M7 1 L1.5 3.2 M0.5 6.5 H8.2 M4.5 2.5 V19 M4.5 7.5 L0.8 14.5 M5 9 L8 12.5 M12.5 0.8 L8.8 5.5 M11 3 H17 L9.5 10.5 M11.8 5.2 L14.3 7.5 M13.5 8.5 L9.5 13.5 M12.5 10.8 H18 C15.5 16 12.5 18.2 8.8 19.2 M12.8 13.5 L15.3 15.5" fill="none" stroke="#111111" stroke-width="2.2" stroke-linecap="butt" stroke-linejoin="miter"/></svg>
<svg style="position:absolute;left:1163.5px;top:474px;" width="20" height="21" viewBox="0 0 20 21"><path d="M1.5 2.5 H8.5 M0.5 7 H9.5 M4.5 7 L1 15.5 L8.5 14 M6.5 11.5 L9.2 16 M9.8 6.5 H17.8 V17.5 C17.8 19 16.8 19 14.8 18.5 M13.5 0.5 V7 C13.5 12 12 16.2 8.8 19.2" fill="none" stroke="#111111" stroke-width="2.2" stroke-linecap="butt" stroke-linejoin="miter"/></svg>
<div class="t" style="left:1188.0px;top:476.2px;font-size:16.98px;color:#111111;font-weight:bold;">Guard</div>
<svg style="position:absolute;left:1244px;top:474px;" width="20" height="21" viewBox="0 0 20 21"><path d="M3.5 2 H15 M0.5 7 H18 M9.2 7 V18 C9.2 19 8.2 19.2 6.2 18.6 M5.2 10.5 L1.2 17 M13.2 10.5 L17.3 16.5" fill="none" stroke="#111111" stroke-width="2.2" stroke-linecap="butt" stroke-linejoin="miter"/></svg>
<svg style="position:absolute;left:1264px;top:474px;" width="20" height="21" viewBox="0 0 20 21"><path d="M4.2 0.8 L0.8 8.5 M2.8 5.2 V19.5 M5.2 2.2 H11.8 M8 2.2 L6.4 9 M6.8 6.2 H10.8 C10.2 11.5 8.2 15.5 5.2 18.5 M7.8 10.5 L9.4 12.5 M12.8 4 V14.5 M16.2 1 V18 C16.2 19.2 15.2 19.4 13.8 18.9" fill="none" stroke="#111111" stroke-width="2.2" stroke-linecap="butt" stroke-linejoin="miter"/></svg>
<svg style="position:absolute;left:1420px;top:300px;" width="410" height="696" viewBox="0 0 410 696"><rect x="15.5" y="36.5" width="329.0" height="584.0" fill="#025d70" stroke="#d8dcdd" stroke-width="1.3" stroke-dasharray="3 1"/><rect x="153.5" y="101.2" width="55.0" height="54.7" fill="#0e7185" stroke="#68cde3" stroke-width="1" stroke-dasharray="3 1"/><text x="181.0" y="131.4" font-family="Liberation Sans" font-size="8" fill="#56a9ba" text-anchor="middle" letter-spacing="0.6">app_logo</text><rect x="110.5" y="170.9" width="139.0" height="25.3" fill="#0e7185" stroke="#68cde3" stroke-width="1" stroke-dasharray="3 1"/><text x="180.0" y="187.1" font-family="Liberation Sans" font-size="10" fill="#56a9ba" text-anchor="middle" letter-spacing="0.6">app_name</text><rect x="35.5" y="223.1" width="289.5" height="40.9" fill="#107589" stroke="#68cde3" stroke-width="1" stroke-dasharray="3 1"/><text x="180.0" y="247.1" font-family="Liberation Sans" font-size="10" fill="#56a9ba" text-anchor="middle" letter-spacing="0.6">register_method_tab</text><rect x="35.5" y="278.0" width="289.5" height="49.5" fill="#248598" stroke="#68cde3" stroke-width="1" stroke-dasharray="3 1"/><text x="180.0" y="306.4" font-family="Liberation Sans" font-size="10" fill="#56a9ba" text-anchor="middle" letter-spacing="0.6">email</text><rect x="35.5" y="330.5" width="289.5" height="49.0" fill="#248598" stroke="#68cde3" stroke-width="1" stroke-dasharray="3 1"/><text x="180.0" y="358.6" font-family="Liberation Sans" font-size="10" fill="#56a9ba" text-anchor="middle" letter-spacing="0.6">password</text><rect x="35.5" y="382.9" width="289.5" height="50.6" fill="#248598" stroke="#68cde3" stroke-width="1" stroke-dasharray="3 1"/><text x="180.0" y="411.8" font-family="Liberation Sans" font-size="10" fill="#56a9ba" text-anchor="middle" letter-spacing="0.6">password_confirm</text><rect x="35.5" y="446.3" width="289.5" height="48.2" fill="#248598" stroke="#68cde3" stroke-width="1" stroke-dasharray="3 1"/><text x="180.0" y="474.0" font-family="Liberation Sans" font-size="10" fill="#56a9ba" text-anchor="middle" letter-spacing="0.6">phone_number</text><rect x="35.5" y="498.4" width="289.5" height="49.1" fill="#248598" stroke="#68cde3" stroke-width="1" stroke-dasharray="3 1"/><text x="180.0" y="526.6" font-family="Liberation Sans" font-size="10" fill="#56a9ba" text-anchor="middle" letter-spacing="0.6">phone_password</text><rect x="35.5" y="551.2" width="289.5" height="49.5" fill="#248598" stroke="#68cde3" stroke-width="1" stroke-dasharray="3 1"/><text x="180.0" y="579.6" font-family="Liberation Sans" font-size="10" fill="#56a9ba" text-anchor="middle" letter-spacing="0.6">phone_password_confirm</text><rect x="35" y="604" width="290.5" height="16.5" fill="#248598"/><rect x="35.5" y="604.5" width="216.0" height="33.0" fill="none" stroke="#6cc6da" stroke-width="1" stroke-dasharray="2 1.5"/><rect x="255.1" y="604.5" width="69.9" height="33.0" fill="none" stroke="#6cc6da" stroke-width="1" stroke-dasharray="2 1.5"/><path d="M35 637.5 H325.5" stroke="#5ec3da" stroke-width="2" stroke-dasharray="2 2"/><rect x="35.5" y="645.3" width="289.5" height="15.2" fill="none" stroke="#5ec3da" stroke-width="1.3" stroke-dasharray="2 2"/><rect x="35.5" y="673.2" width="289.5" height="36.3" fill="none" stroke="#5ec3da" stroke-width="1.3" stroke-dasharray="2 2"/></svg>
<svg style="position:absolute;left:1380px;top:923px;" width="24" height="24" viewBox="0 0 24 24"><path d="M2 22 L22 2 M10 22 L22 10" stroke="#8a8c8e" stroke-width="1"/></svg>
<div style="position:absolute;left:1774px;top:799px;width:34px;height:37px;background:#2b2b2b;box-sizing:border-box;border:1.5px solid #4a4d4f;border-radius:5px;"></div>
<div style="position:absolute;left:1774px;top:841px;width:34px;height:130px;background:#2b2b2b;box-sizing:border-box;border:1.5px solid #4a4d4f;border-radius:5px;"></div>
<svg style="position:absolute;left:1772px;top:797px;" width="38" height="40" viewBox="0 0 38 40"><path d="M16.3 14.6 V21 M19.3 12.8 V21 M22.1 13.6 V21 M24.9 15.6 V21" stroke="#c4c4c4" stroke-width="2.1" stroke-linecap="round"/><path d="M15.25 19.5 H26 V25 C26 27.5 25 28.5 23 28.5 H18.5 C17.3 28.5 16.3 28 15.3 27 L11.2 23 C10.4 22.2 11.2 20.8 12.3 21.4 L15.25 23.3Z" fill="#c4c4c4"/></svg>
<svg style="position:absolute;left:1783px;top:850px;" width="16" height="16" viewBox="0 0 16 16"><path d="M8 2 V14 M2 8 H14" stroke="#c8c8c8" stroke-width="2"/></svg>
<svg style="position:absolute;left:1783px;top:882px;" width="16" height="16" viewBox="0 0 16 16"><path d="M2 8 H14" stroke="#c8c8c8" stroke-width="2"/></svg>
<div class="t" style="left:1782.5px;top:915.6px;font-size:11.07px;color:#c8c8c8;font-weight:bold;">1:1</div>
<svg style="position:absolute;left:1782px;top:944px;" width="18" height="18" viewBox="0 0 18 18"><rect x="1.5" y="2.5" width="15" height="13" fill="none" stroke="#c8c8c8" stroke-width="1.5"/><path d="M4.5 8 V5.5 H7 M13.5 10 V12.5 H11" fill="none" stroke="#c8c8c8" stroke-width="1.2"/></svg>
<div style="position:absolute;left:1828px;top:191px;width:27px;height:805px;background:#3c3f41;"></div>
<div style="position:absolute;left:1828px;top:191px;width:1px;height:805px;background:#323232;"></div>
<div class="t" style="left:1810.5px;top:249.4px;width:61.0px;font-size:14.44px;color:#bbbbbb;transform:rotate(90deg);transform-origin:30.5px 7.1px;">Attributes</div>
<svg style="position:absolute;left:1834px;top:206px;" width="14" height="15" viewBox="0 0 14 15"><path d="M1 3 H13 M1 7.5 H13 M1 12 H13" stroke="#afb1b3" stroke-width="1.3"/><rect x="8" y="1" width="2" height="4" fill="#afb1b3"/><rect x="3" y="5.5" width="2" height="4" fill="#afb1b3"/><rect x="8" y="10" width="2" height="4" fill="#afb1b3"/></svg>
<div style="position:absolute;left:1855px;top:108px;width:25px;height:914px;background:#3c3f41;"></div>
<div style="position:absolute;left:1854px;top:108px;width:1px;height:914px;background:#323232;"></div>
<div class="t" style="left:1845.8px;top:156.1px;width:40.5px;font-size:13.49px;color:#bbbbbb;transform:rotate(90deg);transform-origin:20.2px 6.6px;">Gradle</div>
<svg style="position:absolute;left:1857px;top:120px;" width="19" height="15" viewBox="0 0 19 15"><path d="M1 13 C0.5 8 3 4 8.5 4 C11 4 12.5 5 13.5 6 C14 3 16 1.5 18 2.8 L17 4.3 C16 4.5 16 6 16 7.5 V13 H13.5 V10.5 C11.5 11.5 9.5 11.5 7.5 11 V13 H5 V11 C3.8 11.5 2.5 12 1 13Z" fill="#afb1b3"/></svg>
<div class="t" style="left:1816.5px;top:273.8px;width:99.0px;font-size:13.60px;color:#bbbbbb;transform:rotate(90deg);transform-origin:49.5px 6.7px;">Device Manager</div>
<svg style="position:absolute;left:1859px;top:210px;" width="15" height="16" viewBox="0 0 15 16"><rect x="1" y="2" width="9" height="12" rx="1" fill="none" stroke="#afb1b3" stroke-width="1.5"/><rect x="6" y="6" width="8" height="9" rx="1" fill="#3c3f41" stroke="#afb1b3" stroke-width="1.5"/></svg>
<div class="t" style="left:1840.0px;top:802.6px;width:52.0px;font-size:13.00px;color:#bbbbbb;transform:rotate(90deg);transform-origin:26.0px 6.4px;">Emulator</div>
<svg style="position:absolute;left:1859px;top:760px;" width="16" height="17" viewBox="0 0 16 17"><rect x="1" y="1" width="9" height="13" rx="1" fill="none" stroke="#afb1b3" stroke-width="1.4"/><rect x="6" y="7" width="7" height="7" fill="#3c3f41" stroke="#afb1b3" stroke-width="1.3"/><circle cx="14" cy="14.5" r="2" fill="#3e86c8"/></svg>
<div class="t" style="left:1805.5px;top:939.9px;width:121.0px;font-size:13.52px;color:#bbbbbb;transform:rotate(90deg);transform-origin:60.5px 6.6px;">Device File Explorer</div>
<svg style="position:absolute;left:1859px;top:866px;" width="15" height="16" viewBox="0 0 15 16"><rect x="1.5" y="1" width="11" height="14" rx="1.5" fill="none" stroke="#afb1b3" stroke-width="1.5"/><path d="M5 12 H9" stroke="#afb1b3" stroke-width="1.2"/></svg>
<div style="position:absolute;left:66px;top:996px;width:1789px;height:26px;background:#303234;"></div>
<div style="position:absolute;left:66px;top:995.5px;width:1789px;height:1px;background:#3a3c3e;"></div>
<div class="t" style="left:157.3px;top:1002.3px;font-size:15.71px;color:#bbbbbb;">androidx.constraintlayout.widget.ConstraintLayout</div>
<svg style="position:absolute;left:516px;top:1004px;" width="8" height="12" viewBox="0 0 8 12"><path d="M2 2 L6 6 L2 10" fill="none" stroke="#6f7173" stroke-width="1.2"/></svg>
<div class="t" style="left:534.0px;top:1002.3px;font-size:15.65px;color:#bbbbbb;">cn.authing.guard.RegisterContainer</div>
<div style="position:absolute;left:41px;top:1022px;width:1839px;height:1px;background:#2e2e2e;"></div>
<div class="t" style="left:97.3px;top:1029.9px;font-size:13.19px;color:#bbbbbb;">Run</div>
<div class="t" style="left:164.5px;top:1030.0px;font-size:13.06px;color:#bbbbbb;">TODO</div>
<div class="t" style="left:247.0px;top:1029.7px;font-size:13.73px;color:#bbbbbb;">Problems</div>
<div class="t" style="left:352.0px;top:1029.5px;font-size:14.03px;color:#bbbbbb;">Terminal</div>
<div class="t" style="left:450.0px;top:1029.5px;font-size:13.99px;color:#bbbbbb;">Logcat</div>
<div class="t" style="left:538.0px;top:1029.7px;font-size:13.67px;color:#bbbbbb;">Build</div>
<div class="t" style="left:612.0px;top:1029.6px;font-size:13.89px;color:#bbbbbb;">Profiler</div>
<div class="t" style="left:706.0px;top:1029.6px;font-size:13.86px;color:#bbbbbb;">App Inspection</div>
<div class="t" style="left:1625.5px;top:1029.8px;font-size:13.55px;color:#bbbbbb;">Event Log</div>
<div class="t" style="left:1736.0px;top:1029.5px;font-size:14.01px;color:#bbbbbb;">Layout Inspector</div>
<svg style="position:absolute;left:78px;top:1029px;" width="16" height="16" viewBox="0 0 16 16"><path d="M1.5 1.5 L11 7.5 L1.5 13.5Z" fill="#afb1b3"/><circle cx="10.5" cy="13" r="2.2" fill="#3b7fd1" stroke="#2b2b2b" stroke-width="0.8"/></svg>
<svg style="position:absolute;left:145px;top:1030px;" width="14" height="13" viewBox="0 0 14 13"><path d="M1 2 H3 M5 2 H13 M1 6.5 H3 M5 6.5 H13 M1 11 H3 M5 11 H13" stroke="#afb1b3" stroke-width="1.5"/></svg>
<svg style="position:absolute;left:227px;top:1029px;" width="15" height="15" viewBox="0 0 15 15"><circle cx="7.5" cy="7.5" r="6.5" fill="#afb1b3"/><path d="M7.5 3.5 V8.5" stroke="#3c3f41" stroke-width="1.8"/><circle cx="7.5" cy="11" r="1" fill="#3c3f41"/></svg>
<svg style="position:absolute;left:331px;top:1030px;" width="15" height="14" viewBox="0 0 15 14"><rect x="0.5" y="0.5" width="14" height="13" fill="#afb1b3"/><path d="M3 4 L6 6.5 L3 9 M7 10.5 H11" fill="none" stroke="#3c3f41" stroke-width="1.3"/></svg>
<svg style="position:absolute;left:430px;top:1030px;" width="14" height="14" viewBox="0 0 14 14"><path d="M1 3 H13 M1 7 H9 M1 11 H13" stroke="#afb1b3" stroke-width="1.6"/></svg>
<svg style="position:absolute;left:516px;top:1028px;" width="16" height="16" viewBox="0 0 16 16"><path d="M2 6 L7 1.5 L10 3 L8.5 5 L14.5 13 L13 14.5 L6.5 7 L4.5 8.5Z" fill="#afb1b3"/></svg>
<svg style="position:absolute;left:591px;top:1030px;" width="16" height="13" viewBox="0 0 16 13"><path d="M2 12 A6.5 6.5 0 1 1 14.5 12" fill="none" stroke="#afb1b3" stroke-width="2"/><path d="M8 11 L11 5" stroke="#afb1b3" stroke-width="2"/></svg>
<svg style="position:absolute;left:685px;top:1028px;" width="16" height="17" viewBox="0 0 16 17"><path d="M3 5 H13 V14 C13 15.5 12 16 8 16 C4 16 3 15.5 3 14Z M5 5 C5 2 11 2 11 5 M1 8 H15 M1 11.5 H15" fill="#afb1b3" stroke="#afb1b3" stroke-width="1.3"/></svg>
<svg style="position:absolute;left:1604px;top:1028px;" width="17" height="17" viewBox="0 0 17 17"><path d="M8.5 1.5 C12.5 1.5 15.5 4.5 15.5 8.5 V15.5 H8.5 C4.5 15.5 1.5 12.5 1.5 8.5 C1.5 4.5 4.5 1.5 8.5 1.5Z" fill="none" stroke="#afb1b3" stroke-width="1.6"/></svg>
<svg style="position:absolute;left:1714px;top:1028px;" width="18" height="18" viewBox="0 0 18 18"><path d="M1 1 H11 V4 M1 1 V11 H4" fill="none" stroke="#afb1b3" stroke-width="1.3"/><path d="M4 4 H13 M4 4 V13 H8" fill="none" stroke="#afb1b3" stroke-width="1.3"/><circle cx="12" cy="12" r="3" fill="none" stroke="#afb1b3" stroke-width="1.4"/><path d="M14 14 L17 17" stroke="#afb1b3" stroke-width="1.6"/></svg>
<svg style="position:absolute;left:46px;top:1062px;" width="17" height="17" viewBox="0 0 17 17"><rect x="4" y="1" width="12" height="11" fill="none" stroke="#afb1b3" stroke-width="1.3"/><path d="M1.5 4 V15 H13" fill="none" stroke="#afb1b3" stroke-width="1.3"/></svg>
<div class="t" style="left:78.0px;top:1064.2px;font-size:13.78px;color:#bbbbbb;">Launch succeeded (a minute ago)</div>
<div class="t" style="left:1449.0px;top:1063.2px;font-size:13.81px;color:#bbbbbb;">83:42 (1871 chars, 40 line breaks)</div>
<div class="t" style="left:1674.0px;top:1063.9px;font-size:12.43px;color:#bbbbbb;">LF</div>
<div class="t" style="left:1703.4px;top:1063.2px;font-size:13.98px;color:#787a7c;">UTF-8</div>
<div class="t" style="left:1758.0px;top:1063.1px;font-size:13.99px;color:#bbbbbb;">4 spaces</div>
<svg style="position:absolute;left:1827px;top:1061px;" width="18" height="18" viewBox="0 0 18 18"><circle cx="9" cy="9" r="8.5" fill="#afb1b3"/><circle cx="6" cy="7" r="1.3" fill="#3c3f41"/><circle cx="12" cy="7" r="1.3" fill="#3c3f41"/><path d="M4.5 10.5 C6 14 12 14 13.5 10.5" fill="none" stroke="#3c3f41" stroke-width="1.4"/></svg>
<svg style="position:absolute;left:1856px;top:1061px;" width="18" height="18" viewBox="0 0 18 18"><circle cx="9" cy="9" r="8.5" fill="#afb1b3"/><circle cx="6" cy="7" r="1.3" fill="#3c3f41"/><circle cx="12" cy="7" r="1.3" fill="#3c3f41"/><path d="M4.5 13.5 C6 10 12 10 13.5 13.5" fill="none" stroke="#3c3f41" stroke-width="1.4"/></svg>
<svg style="position:absolute;left:436px;top:82.5px;" width="18" height="19" viewBox="0 0 18 19"><path d="M2.8 7 L6.8 1 V7Z" fill="#9eabc4"/><rect x="8.9" y="0.2" width="5.3" height="8.4" fill="#9eabc4"/><rect x="2.8" y="7" width="11.4" height="1.6" fill="#9eabc4"/><rect x="0" y="10" width="18" height="9" fill="#d65a1a"/><path d="M5.5 12 L2.8 14.8 L5.5 17.5 M8.2 12 L10.9 14.8 L8.2 17.5" stroke="#4a2510" stroke-width="1.3" fill="none"/></svg>
<svg style="position:absolute;left:1005px;top:82px;" width="20" height="20" viewBox="0 0 20 20"><path d="M2 5 L7 1.5 L11 3.5 L9.5 6 L18 16 L15.5 18.5 L7.5 8 L5 9.5Z" fill="#3bb54a"/></svg>
<div style="position:absolute;left:1036px;top:80px;width:1px;height:23px;background:#4b4d4f;"></div>
<svg style="position:absolute;left:1060px;top:84px;" width="18" height="15" viewBox="0 0 18 15"><path d="M1 11 A7.5 7.5 0 0 1 16 11z" fill="#3ddc84"/><path d="M4 4 L2.5 1 M13 4 L14.5 1" stroke="#3ddc84" stroke-width="1.3"/><circle cx="5.5" cy="8" r="0.9" fill="#3c3f41"/><circle cx="11.5" cy="8" r="0.9" fill="#3c3f41"/><circle cx="15.5" cy="12.5" r="2.2" fill="#3b7fd1" stroke="#2b2b2b" stroke-width="0.8"/></svg>
<div class="t" style="left:1104.0px;top:85.4px;font-size:12.39px;color:#bbbbbb;">APP</div>
<svg style="position:absolute;left:1163px;top:87px;" width="11" height="7" viewBox="0 0 11 7"><path d="M0.5 0.5 H10.5 L5.5 6Z" fill="#bbbbbb"/></svg>
<svg style="position:absolute;left:1208px;top:83px;" width="17" height="18" viewBox="0 0 17 18"><rect x="1" y="1" width="9" height="14" rx="1.5" fill="none" stroke="#afb1b3" stroke-width="1.5"/><rect x="8" y="9" width="8" height="7" fill="#3c3f41" stroke="#b479d1" stroke-width="1.2"/><rect x="10.5" y="11.5" width="4" height="3.5" fill="#3b7fd1"/></svg>
<div class="t" style="left:1248.7px;top:85.1px;font-size:13.14px;color:#bbbbbb;">PIXEL 3 XL API 31</div>
<svg style="position:absolute;left:1389px;top:87px;" width="11" height="7" viewBox="0 0 11 7"><path d="M0.5 0.5 H10.5 L5.5 6Z" fill="#bbbbbb"/></svg>
<svg style="position:absolute;left:1424px;top:82px;" width="20" height="20" viewBox="0 0 20 20"><path d="M14 4 A7 7 0 1 0 6 16.5" fill="none" stroke="#27a343" stroke-width="2.3"/><path d="M11 0.5 L16.5 4 L11.5 8Z" fill="#27a343"/><rect x="10" y="11" width="7" height="7" fill="#afb1b3"/></svg>
<svg style="position:absolute;left:1455px;top:82px;" width="20" height="20" viewBox="0 0 20 20"><path d="M14 4 A7 7 0 1 0 6 16.5" fill="none" stroke="#27a343" stroke-width="2.3"/><path d="M11 0.5 L16.5 4 L11.5 8Z" fill="#27a343"/><path d="M9.5 19 L12.5 10 L15.5 19 M10.7 15.5 H14.3" fill="none" stroke="#afb1b3" stroke-width="1.5"/></svg>
<svg style="position:absolute;left:1487px;top:82px;" width="20" height="20" viewBox="0 0 20 20"><path d="M1 2.5 H14 M1 6.5 H14 M1 10.5 H12 M1 14.5 H9" stroke="#afb1b3" stroke-width="2"/><path d="M18 16 C18 18.5 14 18.5 12.5 16.5 L13.5 13.5" fill="none" stroke="#27a343" stroke-width="1.4"/></svg>
<svg style="position:absolute;left:1518px;top:82px;" width="20" height="20" viewBox="0 0 20 20"><ellipse cx="10" cy="11" rx="5" ry="6.5" fill="#27a343"/><path d="M2 6 L5 8 M18 6 L15 8 M1.5 11 H5 M18.5 11 H15 M2 16.5 L5 14.5 M18 16.5 L15 14.5 M7 3 L8.5 5 M13 3 L11.5 5" stroke="#27a343" stroke-width="1.6"/><path d="M6 9.5 H14 M6 12.5 H14" stroke="#3c3f41" stroke-width="1"/></svg>
<svg style="position:absolute;left:1549px;top:82px;" width="22" height="20" viewBox="0 0 22 20"><path d="M2 3 L9 1 L13 3 V11 C13 14 10 17 7.5 18 C5 17 2 14 2 11Z" fill="#8e9093"/><path d="M7.5 1.5 V17.5" stroke="#6a6c6e" stroke-width="1"/><path d="M11 9 L20 14.5 L11 20Z" fill="#8e9093"/></svg>
<svg style="position:absolute;left:1581px;top:82px;" width="20" height="18" viewBox="0 0 20 18"><path d="M2 15 A8 8 0 0 1 18 15" fill="none" stroke="#1e9bd7" stroke-width="2.8"/><path d="M10 14 L14 6" stroke="#afb1b3" stroke-width="2"/><path d="M13 5 A7 7 0 0 1 18 12" fill="none" stroke="#afb1b3" stroke-width="2.5"/></svg>
<svg style="position:absolute;left:1613px;top:82px;" width="22" height="21" viewBox="0 0 22 21"><ellipse cx="9" cy="10" rx="4.5" ry="6" fill="#27a343"/><path d="M1.5 5 L4.5 7 M16.5 5 L13.5 7 M1 10 H4.5 M17 10 H13.5 M1.5 15 L4.5 13 M7 2.5 L8 4.5 M11 2.5 L10 4.5" stroke="#27a343" stroke-width="1.5"/><path d="M12 20 L20 12 M14.5 12 H20 V17.5" fill="none" stroke="#afb1b3" stroke-width="2"/></svg>
<div style="position:absolute;left:1647px;top:84.5px;width:14px;height:14px;background:#db4d4d;"></div>
<div style="position:absolute;left:1675px;top:80px;width:1px;height:23px;background:#4b4d4f;"></div>
<svg style="position:absolute;left:1684px;top:82px;" width="22" height="20" viewBox="0 0 22 20"><path d="M2 17 C1 12 2 7 7 5.5 C10 4.5 13 4.5 15 6 C16 3 19.5 3 19.5 6 C19.5 8 18 9 17 9 V14 H15 V11 C13 12 10 12 8 11 V16 H5.5 V12 C4 13 3 15 2 17Z" fill="#afb1b3"/><path d="M20 9.5 L13 16.5 M12.5 11 V17 H18.5" fill="none" stroke="#1e9bd7" stroke-width="2"/></svg>
<svg style="position:absolute;left:1716px;top:82px;" width="20" height="20" viewBox="0 0 20 20"><rect x="2" y="1" width="10" height="15" rx="1.5" fill="none" stroke="#afb1b3" stroke-width="1.6"/><path d="M8 19 A6 6 0 0 1 19 19z" fill="#3ddc84"/><path d="M9.5 13 L8.5 11 M17.5 13 L18.5 11" stroke="#3ddc84" stroke-width="1.2"/></svg>
<svg style="position:absolute;left:1748px;top:82px;" width="20" height="21" viewBox="0 0 20 21"><path d="M8 1 L15 4.5 L15 12 L8 15.5 L1 12 V4.5Z" fill="#afb1b3"/><path d="M1.5 4.5 L8 8 L15 4.5 M8 8 V15.5" stroke="#3c3f41" stroke-width="1.2" fill="none"/><path d="M15 9 V19 M11 15.5 L15 19.5 L19 15.5" fill="none" stroke="#1e9bd7" stroke-width="2"/></svg>
<div style="position:absolute;left:1778px;top:80px;width:1px;height:23px;background:#4b4d4f;"></div>
<svg style="position:absolute;left:1789px;top:82px;" width="19" height="19" viewBox="0 0 19 19"><circle cx="7.5" cy="7.5" r="5.8" fill="none" stroke="#afb1b3" stroke-width="2"/><path d="M11.5 11.5 L17.5 17.5" stroke="#afb1b3" stroke-width="2.4"/></svg>
<svg style="position:absolute;left:1820px;top:82px;" width="19" height="19" viewBox="0 0 19 19"><circle cx="9.5" cy="9.5" r="5.5" fill="none" stroke="#afb1b3" stroke-width="3.5"/><path d="M9.5 1 V18 M1 9.5 H18 M3.5 3.5 L15.5 15.5 M15.5 3.5 L3.5 15.5" stroke="#afb1b3" stroke-width="2.6"/><circle cx="9.5" cy="9.5" r="2.2" fill="#3c3f41"/></svg>
<div style="position:absolute;left:1852px;top:81px;width:19px;height:20px;background:#c8c8c8;"></div>
<svg style="position:absolute;left:1852px;top:81px;" width="19" height="20" viewBox="0 0 19 20"><circle cx="9.5" cy="7.5" r="3.8" fill="#ffffff"/><path d="M2.5 19 C3 13 16 13 16.5 19Z" fill="#ffffff"/></svg>
<div style="position:absolute;left:985px;top:191px;width:870px;height:1px;background:#323232;"></div>
</body></html>
